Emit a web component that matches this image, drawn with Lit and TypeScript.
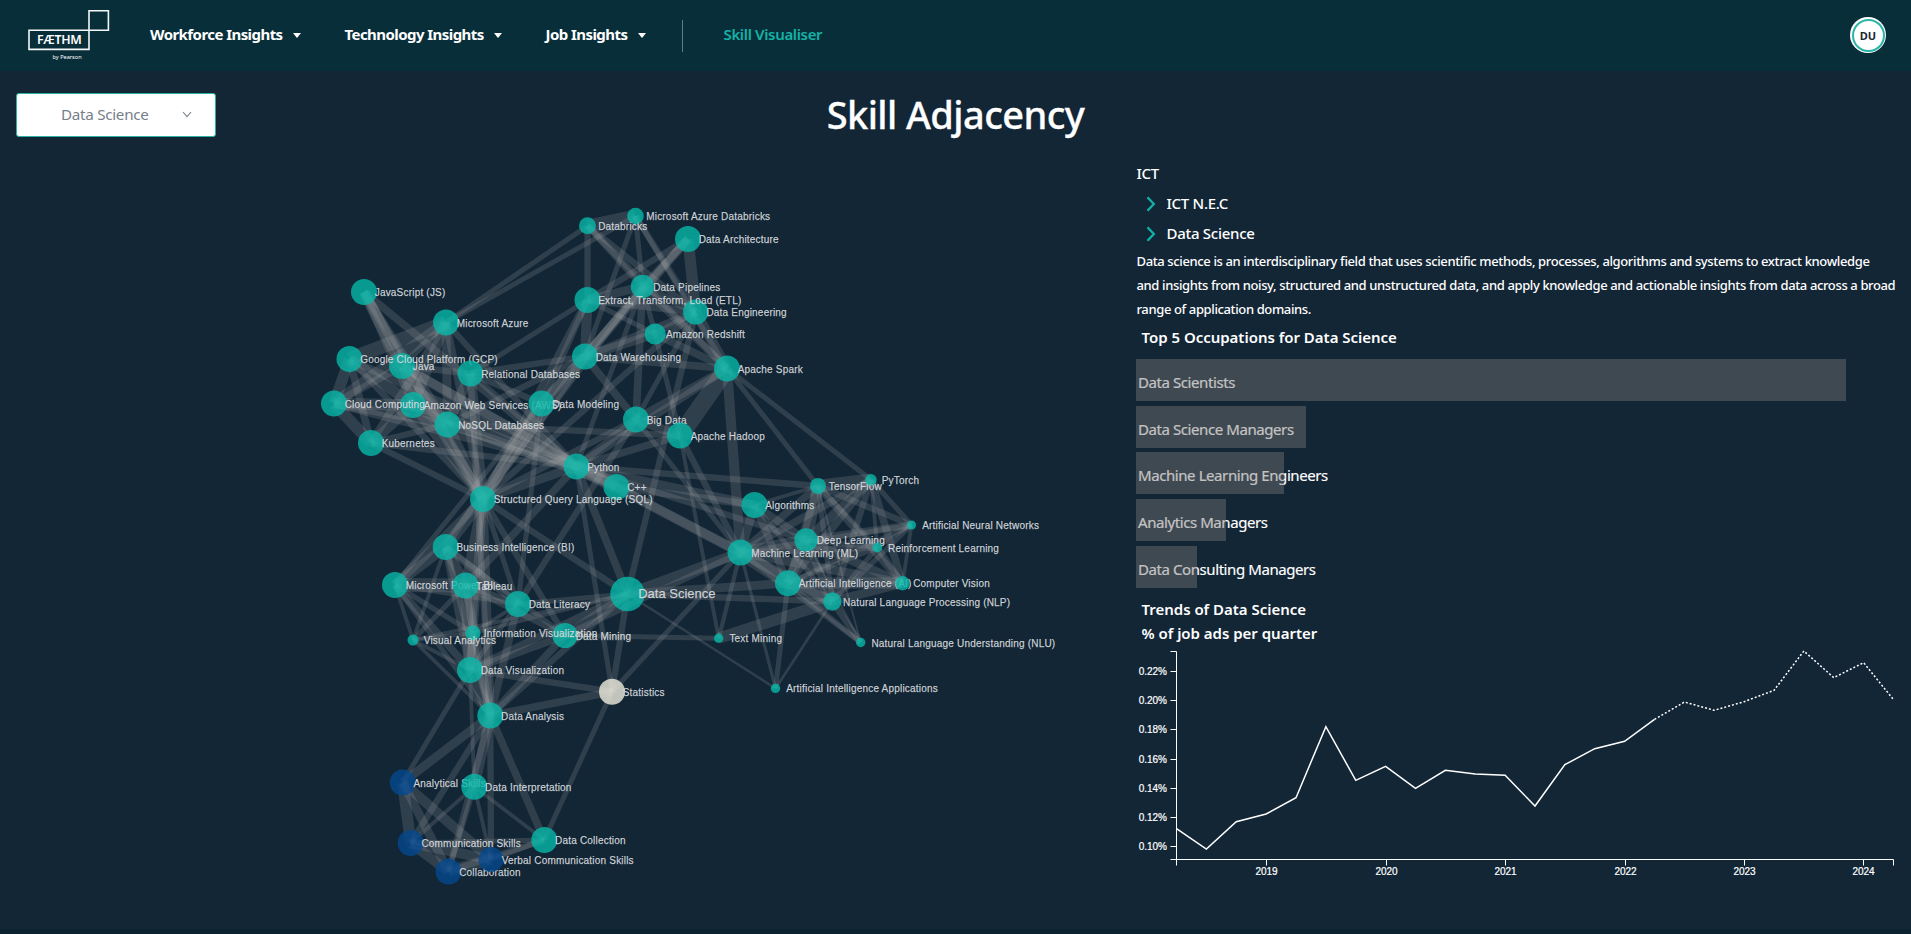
import { LitElement, html, svg, css } from "lit";
import { customElement, state } from "lit/decorators.js";

type Kind = "tech" | "soft" | "stat";
interface SkillNode { id: string; label: string; x: number; y: number; r: number; kind: Kind; }

const n = (id: string, label: string, x: number, y: number, r = 13, kind: Kind = "tech"): SkillNode => ({ id, label, x, y, r, kind });

const NODES: SkillNode[] = [
  n("js", "JavaScript (JS)", 364, 292),
  n("az", "Microsoft Azure", 446, 322.5),
  n("java", "Java", 402, 366),
  n("gcp", "Google Cloud Platform (GCP)", 349.5, 359),
  n("rel", "Relational Databases", 470.5, 373.5),
  n("aws", "Amazon Web Services (AWS)", 413, 405),
  n("cc", "Cloud Computing", 334, 403.5),
  n("nosql", "NoSQL Databases", 447.5, 424.5),
  n("k8", "Kubernetes", 371, 443),
  n("db", "Databricks", 587.5, 225.8, 8.5),
  n("madb", "Microsoft Azure Databricks", 635.5, 216, 8.3),
  n("arch", "Data Architecture", 688, 239),
  n("pipe", "Data Pipelines", 642.5, 286.5, 11.7),
  n("eng", "Data Engineering", 695.7, 312, 12.6),
  n("etl", "Extract, Transform, Load (ETL)", 587.5, 300),
  n("red", "Amazon Redshift", 655.2, 334, 10.6),
  n("wh", "Data Warehousing", 585, 356.5),
  n("spark", "Apache Spark", 727, 368.5),
  n("model", "Data Modeling", 541.5, 403.5),
  n("big", "Big Data", 636, 419.5),
  n("had", "Apache Hadoop", 680, 435.5),
  n("cpp", "C++", 616.5, 487),
  n("py", "Python", 576.5, 466.5),
  n("sql", "Structured Query Language (SQL)", 483, 499),
  n("bi", "Business Intelligence (BI)", 445.7, 547),
  n("pbi", "Microsoft Power BI", 395, 585),
  n("tab", "Tableau", 465.5, 585.5),
  n("lit", "Data Literacy", 518, 604),
  n("ds", "Data Science", 627.5, 594, 17.3),
  n("dm", "Data Mining", 565, 635.5, 12.6),
  n("iv", "Information Visualization", 473, 633, 7.6),
  n("va", "Visual Analytics", 413, 640, 5.5),
  n("dv", "Data Visualization", 470, 670),
  n("stat", "Statistics", 612, 691.7, 13, "stat"),
  n("da", "Data Analysis", 490.3, 715.5),
  n("tf", "TensorFlow", 818, 486, 8),
  n("pt", "PyTorch", 871, 479.7, 5.7),
  n("alg", "Algorithms", 754.5, 505),
  n("dl", "Deep Learning", 806, 540, 11.7),
  n("ml", "Machine Learning (ML)", 740.5, 552.5),
  n("ann", "Artificial Neural Networks", 911.5, 525, 4.6),
  n("rl", "Reinforcement Learning", 877.3, 547.5, 5),
  n("ai", "Artificial Intelligence (AI)", 788, 583.2),
  n("cv", "Computer Vision", 902.5, 583.2, 7.2),
  n("nlp", "Natural Language Processing (NLP)", 832.3, 601.5, 9.2),
  n("tm", "Text Mining", 718.7, 638.2, 4.7),
  n("nlu", "Natural Language Understanding (NLU)", 860.7, 642.5, 4.7),
  n("aia", "Artificial Intelligence Applications", 775.5, 688.4, 4.7),
  n("as", "Analytical Skills", 402.7, 782.5, 13, "soft"),
  n("di", "Data Interpretation", 474.3, 786.7),
  n("cs", "Communication Skills", 410.7, 843, 13, "soft"),
  n("dc", "Data Collection", 544.3, 840),
  n("col", "Collaboration", 448.5, 871.5, 13, "soft"),
  n("vc", "Verbal Communication Skills", 491, 859.5, 12.5, "soft"),
];

/* source: "target width" pairs */
const LINKS: Record<string, string> = {
  db: "madb 10,az 4,etl 5,pipe 5,eng 5,spark 5",
  madb: "az 4,wh 4,pipe 4,eng 5,spark 4",
  arch: "etl 5,wh 7,model 6,eng 9,pipe 6",
  pipe: "etl 7,wh 6,eng 6,big 6,red 4,spark 6,py 4,sql 4",
  eng: "wh 6,etl 6,big 4,ds 5,spark 8,red 5,sql 5",
  etl: "wh 8,model 5,sql 6,red 4",
  red: "wh 7,spark 6,had 4",
  wh: "spark 6,big 6,model 8,sql 7,rel 5,nosql 5",
  spark: "big 7,had 14,py 6,ml 8,tf 4,pt 4",
  big: "py 6,had 7,ml 4,lit 5,sql 5",
  had: "py 6,ml 5,nosql 5,tm 3",
  model: "sql 9,rel 5,bi 5,lit 4,pbi 4",
  js: "java 9,sql 7,nosql 6,py 6,aws 6",
  az: "gcp 11,java 5,cc 9,aws 8,k8 6,nosql 7,sql 6,py 5",
  gcp: "cc 9,aws 9,k8 6,py 6,sql 5",
  java: "sql 8,nosql 7,py 8,cpp 7,aws 6,cc 6,rel 5",
  cc: "aws 9,k8 9,py 6,nosql 7",
  aws: "k8 8,nosql 8,py 7,sql 7",
  nosql: "py 7,sql 8,k8 5,cpp 5,rel 8",
  k8: "py 5,sql 5",
  rel: "sql 8,py 5,etl 4,da 5",
  cpp: "py 11,ml 7,alg 6",
  py: "tf 5,alg 7,ml 8,dl 5,ds 6,stat 4,sql 7,tab 6",
  sql: "bi 9,pbi 7,tab 8,lit 4,dm 5,ds 5,da 7,dv 7,iv 4",
  bi: "pbi 8,lit 6,dm 4,dv 6,da 5,va 3,tab 8",
  pbi: "tab 11,va 3,iv 4,dv 6,da 4,lit 4",
  tab: "lit 5,va 4,iv 5,dv 9,da 7,dm 5",
  lit: "dv 4,da 6,iv 3,ds 4",
  iv: "dv 6,da 4,va 3,ds 3",
  va: "dv 3,da 3,ds 3",
  dm: "dv 6,da 6,ds 7,tm 4,ml 5",
  ds: "dv 6,ml 8,ai 7,nlp 5,aia 2,stat 5,da 5",
  dv: "stat 5,as 4,di 3,da 8",
  da: "stat 6,as 7,di 8,cs 5,vc 5,dc 6,col 5",
  stat: "dc 4,ml 4",
  di: "cs 3,col 4,vc 3,dc 3",
  as: "cs 9,col 7,vc 8",
  cs: "col 8,dc 4,vc 8",
  col: "vc 9,dc 5",
  vc: "dc 4",
  tf: "pt 10,dl 9,ml 6,ann 5,rl 4,cv 6,ai 6,nlp 4,nlu 1.5",
  pt: "dl 7,ml 6,ann 4,cv 6,nlp 5,ai 6,rl 3",
  alg: "ml 7,dl 6,ai 6,nlp 4,tf 3",
  dl: "ml 9,ann 6,rl 4,ai 8,cv 7,nlp 6,nlu 1.8",
  ml: "ann 4,rl 5,ai 11,cv 7,nlp 8,nlu 4,tm 3.4,aia 2.6",
  ann: "rl 3,cv 3,ai 4,nlp 4",
  rl: "ai 4,cv 5,nlp 4",
  ai: "cv 9,nlp 8,nlu 4,aia 4",
  cv: "nlp 7",
  nlp: "nlu 5,tm 9,aia 2.2",
};

const BY_ID = new Map(NODES.map((d) => [d.id, d]));
const EDGE_SCALE = 1.26;
const EDGES = Object.entries(LINKS).flatMap(([from, list]) =>
  list.split(",").map((item) => {
    const [to, w] = item.split(" ");
    return { a: BY_ID.get(from)!, b: BY_ID.get(to)!, w: Number(w) * EDGE_SCALE };
  }),
);

const FILL: Record<Kind, string> = { tech: "#06b8a9", soft: "#04488e", stat: "#efecde" };

@customElement("skill-graph")
class SkillGraph extends LitElement {
  static styles = css`
    :host { display: block; }
    svg { display: block; }
    .edge { stroke: #b1afb0; stroke-opacity: 0.18; }
    .node { fill-opacity: 0.8; }
    .label { font: 10px "Liberation Sans", Arial, sans-serif; letter-spacing: 0.2px; fill: #d6dadd; fill-opacity: 0.95; stroke: #d6dadd; stroke-width: 0.25px; stroke-opacity: 0.8; }
    .focus { font-size: 13px; letter-spacing: 0; }
  `;
  render() {
    return html`<svg width="1120" height="770" viewBox="0 158 1120 770">
      ${EDGES.map((e) => svg`<line class="edge" x1=${e.a.x} y1=${e.a.y} x2=${e.b.x} y2=${e.b.y} stroke-width=${e.w}></line>`)}
      ${NODES.map((d) => svg`
        <circle class="node" cx=${d.x} cy=${d.y} r=${d.r} fill=${FILL[d.kind]}></circle>
        <text class=${d.id === "ds" ? "label focus" : "label"} x=${d.x + 10.7} y=${d.y + 4}>${d.label}</text>`)}
    </svg>`;
  }
}

const TREND = [596, 657, 575, 552, 503, 290, 451, 409, 475, 421, 432, 436, 528, 404, 356, 334, 268, 216, 241, 215, 181, 63, 143, 98, 209];
const KNOWN = 17;

@customElement("trend-chart")
class TrendChart extends LitElement {
  static styles = css`
    :host { display: block; }
    svg { display: block; overflow: visible; }
    .axis { fill: none; stroke: #fff; }
    .line { fill: none; stroke: #fff; stroke-width: 1.5; }
    .future { stroke-dasharray: 2 2; }
    text { font: 10px "Liberation Sans", Arial, sans-serif; fill: #fff; stroke: #fff; stroke-width: 0.2px; }
    .y { text-anchor: end; }
    .x { text-anchor: middle; }
  `;
  render() {
    const left = 40.5, top = 6.5, bottom = 214.5, right = 757.5;
    const step = (right - left) / (TREND.length - 1);
    const pts = TREND.map((v, i) => `${left + i * step},${v / 3 - 15}`);
    const yt = ["0.22%", "0.20%", "0.18%", "0.16%", "0.14%", "0.12%", "0.10%"];
    const xt = ["2019", "2020", "2021", "2022", "2023", "2024"];
    return html`<svg width="775" height="240" viewBox="0 0 775 240">
      <path class="axis" d="M${left - 6} ${top}H${left}V${bottom}H${left - 6}"></path>
      <path class="axis" d="M${left} ${bottom + 6}V${bottom}H${right}V${bottom + 6}"></path>
      ${yt.map((t, i) => {
        const y = Math.round(26 + i * 29.17) + 0.5;
        return svg`<path class="axis" d="M${left - 6} ${y}H${left}"></path><text class="y" x="31" y=${y + 3.3}>${t}</text>`;
      })}
      ${xt.map((t, i) => {
        const x = Math.round(130.3 + i * 119.4) + 0.5;
        return svg`<path class="axis" d="M${x} ${bottom}V${bottom + 6}"></path><text class="x" x=${x} y="230">${t}</text>`;
      })}
      <polyline class="line" points=${pts.slice(0, KNOWN).join(" ")}></polyline>
      <polyline class="line future" points=${pts.slice(KNOWN - 1).join(" ")}></polyline>
    </svg>`;
  }
}

const OCCUPATIONS = [
  { name: "Data Scientists", width: 710 },
  { name: "Data Science Managers", width: 169.5 },
  { name: "Machine Learning Engineers", width: 148 },
  { name: "Analytics Managers", width: 90 },
  { name: "Data Consulting Managers", width: 61 },
];

@customElement("app-root")
class AppRoot extends LitElement {
  static styles = css`
    :host { display: flex; flex-direction: column; height: 934px; box-sizing: border-box; overflow: hidden;
      background: #132636; color: #fff; font-family: "Noto Sans", sans-serif; border-bottom: 5px solid #0b212f; }
    header { display: flex; align-items: center; height: 71px; flex: none; padding: 0 25px 0 28px; background: #082e3a; box-sizing: border-box; }
    .logo { display: block; width: 82px; height: 71px; margin-right: 40px; }
    .logo path { fill: none; stroke: #f4f8f9; stroke-width: 1.6; }
    .logo text { fill: #fff; }
    .brand { font: 600 12.4px "Noto Sans", sans-serif; letter-spacing: -0.3px; }
    .by { font: 5.6px "Noto Sans", sans-serif; }
    nav { display: flex; align-items: center; flex: 1; }
    .item { display: flex; align-items: center; font-size: 15px; font-weight: 700; line-height: 24px; padding-bottom: 3px; letter-spacing: -0.56px; white-space: nowrap; }
    .w1 { width: 143px; } .w2 { width: 149.5px; } .w3 { width: 92px; }
    .caret { width: 0; border: 4.5px solid transparent; border-top: 5px solid #fff; border-bottom: 0; margin: 3px 43.5px 0 0; }
    .divider { width: 1px; height: 32px; background: #5d7f86; margin: 0 41px 0 -7.5px; }
    .active { color: #14b2a6; font-weight: 600; letter-spacing: -0.35px; }
    .avatar { width: 36px; height: 36px; border-radius: 50%; background: #fff; display: grid; place-items: center; margin-bottom: 1px; }
    .ring { width: 29px; height: 29px; border: 2px solid #2ab5a8; border-radius: 50%; display: grid; place-items: center; color: #1a2630; font-size: 11px; font-weight: 700; line-height: 1; }
    .top { display: grid; grid-template-columns: 1fr auto 1fr; height: 87px; flex: none; padding: 0 16px; box-sizing: border-box; }
    .select { margin-top: 22px; width: 200px; height: 44px; box-sizing: border-box; background: #fff; border: 1px solid #2bb0a4; border-radius: 3px; display: flex; align-items: center;
      padding: 0 23px 2px 44px; justify-content: space-between; color: #76808a; font: 15.2px "Noto Sans", sans-serif; letter-spacing: -0.28px; }
    .select svg { width: 10px; height: 7px; fill: none; stroke: #76808a; stroke-width: 1.1; }
    h1 { margin: 17px 0 0; font-size: 38px; line-height: 52px; font-weight: 500; letter-spacing: -0.57px; -webkit-text-stroke: 0.3px #fff; }
    main { display: flex; gap: 16px; flex: 1; min-height: 0; }
    .panel { flex: 1; min-width: 0; }
    .row { display: flex; align-items: center; height: 30px; padding-left: 0.5px; font-size: 15px; font-weight: 500; letter-spacing: -0.28px; }
    .row svg { width: 10px; height: 16px; margin: 2px 10.5px 0 9.5px; fill: none; stroke: #12b0a4; stroke-width: 2.4; }
    p { margin: 1px 0 4px 0.5px; font-size: 13px; line-height: 24px; font-weight: 500; letter-spacing: -0.375px; white-space: nowrap; }
    h2 { margin: 0 0 0 5.5px; font-size: 15px; line-height: 24px; font-weight: 600; letter-spacing: -0.02px; }
    .bars { display: grid; gap: 4.7px; margin: 10px 0 9px; }
    .bar { height: 42px; display: grid; grid-template-rows: 42px; }
    .bar > * { grid-area: 1 / 1; }
    .bar .name { font-size: 15px; line-height: 46.6px; padding-left: 2px; letter-spacing: -0.42px; white-space: nowrap; -webkit-text-stroke: 0.15px #fff; }
    .bar .fill { background: rgba(121, 119, 119, 0.44); height: 42px; z-index: 1; }
  `;

  @state() private skill = "Data Science";

  private menu(label: string, cls: string) {
    return html`<div class="item"><span class=${cls}>${label}</span><span class="caret"></span></div>`;
  }

  render() {
    const chevron = html`<svg viewBox="0 0 10 16"><path d="M1.5 1.2 7.8 8 1.5 14.8"></path></svg>`;
    return html`
      <header>
        <svg class="logo" viewBox="28 0 82 71">
          <path d="M29 30.2H89V49.4H29ZM89 10.8H108.4V30.2H89Z"></path>
          <text class="brand" x="37" y="44.4">FÆTHM</text>
          <text class="by" x="52.5" y="59">by Pearson</text>
        </svg>
        <nav>
          ${this.menu("Workforce Insights", "w1")}
          ${this.menu("Technology Insights", "w2")}
          ${this.menu("Job Insights", "w3")}
          <span class="divider"></span>
          <div class="item active">Skill Visualiser</div>
        </nav>
        <div class="avatar"><div class="ring">DU</div></div>
      </header>
      <div class="top">
        <div class="select"><span>${this.skill}</span><svg viewBox="0 0 10 7"><path d="M1 1 5 5.6 9 1"></path></svg></div>
        <h1>Skill Adjacency</h1>
      </div>
      <main>
        <skill-graph></skill-graph>
        <section class="panel">
          <div class="row">ICT</div>
          <div class="row">${chevron}ICT N.E.C</div>
          <div class="row">${chevron}${this.skill}</div>
          <p>Data science is an interdisciplinary field that uses scientific methods, processes, algorithms and systems to extract knowledge<br />and insights from noisy, structured and unstructured data, and apply knowledge and actionable insights from data across a broad<br />range of application domains.</p>
          <h2>Top 5 Occupations for ${this.skill}</h2>
          <div class="bars">
            ${OCCUPATIONS.map((o) => html`<div class="bar"><span class="name">${o.name}</span><span class="fill" style="width:${o.width}px"></span></div>`)}
          </div>
          <h2>Trends of ${this.skill}</h2>
          <h2>% of job ads per quarter</h2>
          <trend-chart></trend-chart>
        </section>
      </main>
    `;
  }
}
